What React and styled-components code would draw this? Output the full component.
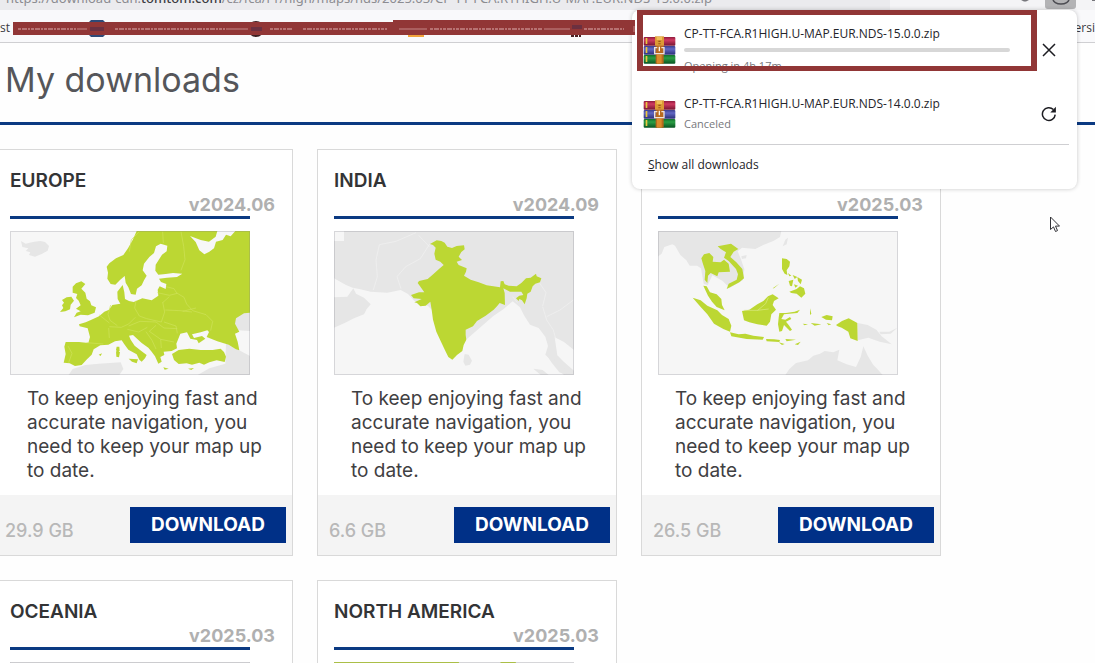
import React from 'react';
import styled, { createGlobalStyle } from 'styled-components';

const GlobalStyle = createGlobalStyle`
    * {
        box-sizing: border-box;
    }
    body {
        margin: 0;
        background: #fefefe;
    }
    h1, h2, p {
        margin: 0;
    }
`;

const Screen = styled.div`
    position: relative;
    height: 100vh;
    overflow: hidden;
    font-family: Inter, "Open Sans", sans-serif;
    color: #333;
`;

const Toolbar = styled.div`
    display: flex;
    align-items: flex-end;
    height: 10px;
    overflow: hidden;
    background: #f4f4f6;
`;

const UrlField = styled.div`
    flex: 1;
    display: flex;
    align-items: flex-end;
    height: 10px;
    padding: 0 0 2px 6px;
    background: #ebebee;
    color: #8c8c91;
    font: 13px/20px "Noto Sans", sans-serif;
    white-space: nowrap;
    b {
        font-weight: 500;
        color: #3c3c42;
    }
`;

const ToolbarButtons = styled.div`
    display: flex;
    justify-content: flex-end;
    width: 205px;
    height: 10px;
`;

const Bookmarks = styled.div`
    position: relative;
    display: flex;
    justify-content: space-between;
    align-items: center;
    height: 33px;
    padding-top: 4px;
    background: #f9f9fb;
    border-bottom: 1px solid #cfcfd2;
    color: #3a3a40;
    font: 12px/16px "Open Sans", sans-serif;
`;

const Strikes = styled.svg`
    position: absolute;
    z-index: 3;
    left: 0;
    top: 8px;
`;

const PageTitle = styled.h1`
    padding: 11px 5px 16px;
    border-bottom: 3px solid #0b3a82;
    color: #55565a;
    font-size: 34px;
    line-height: 52px;
    font-weight: 400;
`;

const Cards = styled.main`
    display: grid;
    grid-template-columns: repeat(auto-fill, 300px);
    gap: 24px;
    margin: 24px 0 0 -7px;
`;

const Card = styled.section`
    border: 1px solid #d9d9d9;
    background: #fff;
`;

const CardHead = styled.div`
    height: 66px;
    padding: 19px 17px 0 16px;
`;

const Region = styled.h2`
    min-height: 24px;
    font-size: 19px;
    line-height: 24px;
    font-weight: 600;
    color: #333436;
`;

const Version = styled.p`
    text-align: right;
    font-size: 18px;
    line-height: 24px;
    font-weight: 700;
    color: #b0b0b0;
`;

const MapBox = styled.div`
    width: 240px;
    margin-left: 16px;
    padding-top: 12px;
    border-top: 3px solid #0b3a82;
    svg {
        display: block;
        width: 240px;
        height: 144px;
    }
`;

const Text = styled.p`
    padding: 12px 12px 12px 33px;
    font-size: 19px;
    line-height: 24px;
    color: #3f4042;
`;

const CardFoot = styled.div`
    display: flex;
    justify-content: space-between;
    align-items: center;
    height: 60px;
    padding: 0 6px 0 11px;
    background: #f4f4f4;
`;

const Size = styled.span`
    padding-top: 12px;
    font-size: 18px;
    line-height: 24px;
    font-weight: 500;
    color: #b8b8b8;
`;

const DownloadButton = styled.button`
    width: 156px;
    height: 36px;
    padding: 0;
    border: 0;
    background: #003087;
    color: #fff;
    font: 700 19px/36px Inter, sans-serif;
`;

const Panel = styled.aside`
    position: absolute;
    z-index: 2;
    top: 10px;
    right: 18px;
    width: 445px;
    height: 179px;
    padding: 14px 8px 0;
    border-radius: 8px;
    background: #fff;
    box-shadow: 0 0 4px rgba(0, 0, 0, 0.22);
    font: 12px/20px "Open Sans", sans-serif;
    color: #24242a;
`;

const DownloadRow = styled.div`
    display: grid;
    grid-template-columns: 33px 1fr 40px;
    column-gap: 8px;
    align-items: center;
    height: ${props => props.$tall ? '70px' : '50px'};
    padding: 0 0 ${props => props.$tall ? '20px' : '10px'} 3px;
`;

const FileInfo = styled.div`
    display: flex;
    flex-direction: column;
    align-items: flex-start;
    progress {
        appearance: none;
        width: 326px;
        height: 4px;
        margin: 4px 0;
        border: 0;
        border-radius: 2px;
        overflow: hidden;
        background: #d7d7d7;
    }
    progress::-webkit-progress-bar {
        background: #d7d7d7;
    }
`;

const Status = styled.span`
    font-size: 11px;
    color: #77777c;
`;

const IconButton = styled.button`
    display: flex;
    justify-content: center;
    width: 40px;
    padding: 0;
    border: 0;
    background: none;
`;

const ShowAll = styled.a`
    display: block;
    padding: 10px 8px;
    border-top: 1px solid #cfcfd2;
    color: inherit;
    text-decoration: none;
`;

const Frame = styled.div`
    position: absolute;
    z-index: 3;
    top: 10px;
    right: 58px;
    width: 400px;
    height: 61px;
    border: solid #913636;
    border-width: 5px 6px;
    pointer-events: none;
`;

const Pointer = styled.svg`
    position: absolute;
    top: 216px;
    right: 35px;
`;

const GREEN = '#bcd733';
const LAND = '#e6e6e6';

function EuropeMap() {
    return (
        <svg viewBox="32 273 720 432" role="img" aria-label="Europe">
            <path fill="#f7f7f7" d="M32 273h720v432H32z" />
            <g fill={LAND}>
                <path d="M65 303l14 8 12-3 14-3 18-2 14 3 12 12-4 14-18 10-20 8-18-5 4-8-14-4 8-8-18-4z" />
                <path d="M208 705l12-18 38-12 40-4 66-4 8 20-12 18z" />
                <path d="M700 540l12-14 26-11 14 4v54l-36-2-12-12zM680 610l34 18 38 20v57H595l35-20 48-14z" />
            </g>
            <g fill={GREEN}>
                <path d="M412 273l-12 27-14 25-14 20-22 10-20 15-8 10 4 18-2 18 10 16 14 2 14-14 14-12 3 20 8 14 8 20 14 2 4-18 14-10 7-15 8-14-12-16 4-20 16-20 14-12 6-20 14-8 20 6-2 17-14 10-10 16-9 14-1 18 9 12 22-2 22-3 28 2-16 10-30 2-24 3 6 10 16 6-2 15-18-8-6 10 2 18-20 14-28-6-26 11-14-3-12-6-2-20-5-22-16 20 1 22 8 14-24 4-10 14-14 6-16 14-26 12-14 6-20 6 2 6 24 6 7 26-5 18-28-3-40 0-4 14 4 22-6 26 18 2 16 8 20-3 16-17 14-14 6-16 20-12 24-2 20-10 20-3 8 12 12 16 25 14 8 16 7 6 10-10 5-10-16-12-20-16-12-18-5-12 12-2 26 24 20 14 10 12 10 14 10 22 10-6-4-14 12-6-2-10 24-2 16-8-2-14 12-30 20-4 10 19 20 4 5 10 20-14-10-8-24 6-6-11 26-6 20-6 5 5-7 15 32 13 34 10 22 14 10 3-5-26-8-24 13-6-13-24 3-16 24-15 22-2V273h-48l-14 16-14-5-10 16-20 5-6 20-14 10-15 8-15-12-11-25-17-18 32 12 25 5 20-15 5-17z" />
                <path d="M518 642l20-12 32-4 34 4 36 0 24-4 10 10 6 14-4 16-24-5-22 6-16 7-14-6-22 6-16-4-24 2-14-12z" />
                <path d="M220 440l10-10 16-6 12 8-12 14 12 12 4 18 10 8 4 12 14 6-4 16-20 8-22-2-20 8 8-14 12-4-14-8 14-10-6-14-8-8 4-12-14-4z" />
                <path d="M188 480l14-8 14-2 8 12-10 12-2 14-14 6-16 2 10-12-4-8 6-8zM352 620l8 0 1 12-6 6-5-8zM350 634l12 2-3 16-8-2zM388 656l28 2-4 12-14-5zM492 682l16 4-12 3zM566 686l18-2-8 6zM298 644l10-4-4 8zM360 460l10 14-8 8z" />
            </g>
            <g fill="none" stroke="#cfe35a" strokeWidth="2">
                <path d="M390 335l6-36 24-24M490 275l2 34M545 275l8 44 4 40-12 32M500 440l24 6 10 16M474 458l36 8 24-6 20 12 8 20 18 20 40 12 20 20-6 28M490 488l20-18M410 482l-4 22 14 24 22 8 44 10 10-30-6-30M498 510l44 2 36 4M334 495l-8 28 6 18 22 16M330 560l36 2 22-10 20-20M300 525l30 24M388 558l34-14 48 2 24 18 40 2M384 568l34 8 26-14M440 575l18 26 12 26M470 556l-20 18 34 24 2 26M484 598l40 8M262 608l50 4M206 618l12 22-10 28M328 564l2 30M494 546l36 12 4 22M590 504l-40 10" />
            </g>
        </svg>
    );
}

function IndiaMap() {
    return (
        <svg viewBox="74 273 720 432" role="img" aria-label="India">
            <path fill={LAND} d="M74 273h720v432H74z" />
            <g fill="#f6f6f6">
                <path d="M74 415l36 20 20 8 20 4 34 8 50 3 40-8 22 12 20 22 40 14 80 80 36 20 80-70 30-20 28-24 22 18 12 24 18 28 26 10 20 26 8 28-8 26 20 20 26 30 10 12H74z" />
                <path d="M736 592l28 14 30 24v62l-30-26-20-20zM74 273h30v30H74z" />
            </g>
            <g fill={LAND}>
                <path d="M74 472l40-2 18-25 8 16 24 12 20 20-12 14-8 16-30 12-28 14-32 14z" />
                <path d="M466 642l12 2 10 18-6 12-14 3-6-12zM672 686l28 4 18 15h-24zM714 648l22 12 18 12 20 20-4 13-20-8-24-30z" />
            </g>
            <g fill="none" stroke="#f1f1f1" strokeWidth="2">
                <path d="M192 450l12-40-4-50 10-46M210 314l50-10 60-26M275 446l-12-36 26-30 44-24 28-44M360 320l-32-34M610 470l14 18M700 500l12 40 20 30 8 30M712 530l40-20 40-30M690 428l20 30-10 40" />
            </g>
            <path fill={GREEN} d="M362 312l20-11 14 2 10 5 8 12 14 4 14-6 22-2 2 12-10 8-8 14 10 10-16 5 6 10 24 10-2 10-6 12 20 12 24 8 24 9 40 6 2-18 8-1 4 10 12 4 24 2 14-10 14-14 14-2 16-12 2 8 14 6-4 12-14 4-8 8-6 16-10 6-2 14-6 18-8-12-8-4-2 6-8-8 10-8 12-2-6-10-34 0-20-10 4 14 1 36-16-6-8 10-10 10-24 18-26 16-12 16-22 10 0 16 2 14-8 16-4 18-16 12-14 14-12-8-10-20-12-26-14-30-10-36-4-30-4-24-14 12-16 2-10-10-8-2 22-10-24-2-8-10 24-8 16 0-14-20-6-8 4-6 26-6 14-12 20-18 14-12-10-10-14-6-4-18 4-18-8-8z" />
        </svg>
    );
}

function AsiaMap() {
    return (
        <svg viewBox="86 154 720 432" role="img" aria-label="South East Asia">
            <path fill="#f6f6f6" d="M86 154h720v432H86z" />
            <g fill={LAND}>
                <path d="M86 154h370l-4 18-20 12-30 12-24 12-40-4-13 11 10 24 10 30-4 32-40 24-22-22-30-16-14 30-12-5-8-46-12-8-22 0-10-16-18-16-16-28-8-4-24 8-8 20-16 12z" />
                <path d="M468 586l12-18 20-18 36-8 16-14 20-6 14-8 26 4 18-8-6 32 28 12 28 8 14-30 8-32 14 30 16 26 12 12 16 18zM685 430l30 6 26 14 16 20 30 24-36-8-34-12-32 8zM750 456l30 0 24-12-20 18-30 2zM460 200l8-20 8-6-4 20zM336 230l16-4-2 10-12 2z" />
            </g>
            <g fill={GREEN}>
                <path d="M265 200l20-4 20-4 22 16-14 8-10 16 18 16 18 20 5 28-14 12-38 20 6-16 24-12 4-16-6-16-22-24-14-10 6-16-16-10zM216 236l8-12 16-4 12 12-2 14 24 2 10-8 14 12 4 24-34 2-4 12-20-10-8 8-2 22-8-10 2-26-8-24z" />
                <path d="M222 318l10 2 10 18 20 6 14 14 2 18 8 16-24-10-14-16-12-18zM190 354l24 8 20 16 30 14 14 14 20 12 8 20-4 18-20-8-28-16-20-28-20-22zM302 458l26 6 20-2 24 6 32 4-4 8-48-2-46-8zM410 478l24 1 18 2-2 6-38-2zM448 488l18 5-8 3zM468 478l32 2-28 5zM496 494l18-8-8 10z" />
                <path d="M338 394l22-4 24-16 18-10 14-14 14-6 18 12-14 8-4 12 10 14-14 14-4 22-10 12-28-4-24-6-16-6z" />
                <path d="M458 236l14 2 10 8-2 14-8 12 2 14-8-4-8-14zM476 280l10 8-6 2zM490 286l14 6-8 6zM478 304l14-4-4 20-6-2zM504 292l14 8-4 14-8-10zM494 314l12 4-8 6zM480 336l22-8 10-8 12 6 4 16-12 12-14-12-16-2zM430 326l20-14-16 14z" />
                <path d="M450 400l20 0 26-4 16-6-8 10-40 4-8 14 12 2 14-8 4 6-16 8 8 10 10 14-6 4-18-18-6 18-8 2-4-22 2-20zM542 386l4 16-4 4zM576 412l16-6 18 4-2 12-18-2zM520 432l16 2-10 3zM544 430l32 4-20 4zM592 430l14 4-8 3zM620 436l18-12 20-8 26 14 1 54-22-8-6-20-20-12-12-4z" />
            </g>
            <path fill="none" stroke="#dbea86" strokeWidth="2" d="M345 392l40 0 24-20 8-18M384 392l34-4" />
        </svg>
    );
}

function OceaniaMap() {
    return (
        <svg viewBox="0 0 240 144" role="img" aria-label="Oceania">
            <path fill="#f6f6f6" d="M0 0h240v144H0z" />
            <path fill="none" stroke="#dcdcdc" d="M0 0h240v144H0z" />
        </svg>
    );
}

function NorthAmericaMap() {
    return (
        <svg viewBox="0 0 240 144" role="img" aria-label="North America">
            <path fill="#f6f6f6" d="M0 0h240v144H0z" />
            <path fill={GREEN} d="M0 0h125l-10 60-60 50L0 30zM166 0h16l-4 12z" />
        </svg>
    );
}

const MapFrame = styled.div`
    position: relative;
    &::after {
        content: "";
        position: absolute;
        inset: 0;
        border: 1px solid rgba(120, 120, 130, 0.25);
    }
`;

function ArchiveIcon() {
    return (
        <svg width="33" height="28" viewBox="0 0 99 84">
            <defs>
                <linearGradient id="red" x1="0" y1="0" x2="0" y2="1">
                    <stop offset="0" stopColor="#8f1a3c" />
                    <stop offset=".35" stopColor="#cf3a61" />
                    <stop offset="1" stopColor="#771633" />
                </linearGradient>
                <linearGradient id="blue" x1="0" y1="0" x2="0" y2="1">
                    <stop offset="0" stopColor="#3b3f8f" />
                    <stop offset=".35" stopColor="#6268c4" />
                    <stop offset="1" stopColor="#2b2f78" />
                </linearGradient>
                <linearGradient id="green" x1="0" y1="0" x2="0" y2="1">
                    <stop offset="0" stopColor="#12702c" />
                    <stop offset=".35" stopColor="#2b9e44" />
                    <stop offset="1" stopColor="#0a5422" />
                </linearGradient>
            </defs>
            <rect x="2" y="3" width="95" height="26" rx="3" fill="url(#red)" />
            <rect x="2" y="30" width="95" height="26" rx="3" fill="url(#blue)" />
            <rect x="2" y="57" width="95" height="26" rx="3" fill="url(#green)" />
            <path fill="#e9c63f" d="M8 6h5v18H8zM8 33h5v18H8zM8 60h5v18H8z" />
            <path fill="#b8691d" d="M38 28h24v55H38z" />
            <path fill="#d98a2b" d="M42 56h14v27H42z" />
            <path fill="#dc9a35" d="M36 1h27v28H36z" />
            <path fill="#f0bf58" d="M41 3h16v9H41z" />
            <path fill="#9a5418" d="M46 14h7v4h-7zM46 22h7v3h-7z" />
            <path fill="none" stroke="#efe3dc" strokeWidth="4" d="M43 35H35v18h28V35h-8" />
            <path fill="#f7f3ec" d="M47 32h4v14h-4z" />
        </svg>
    );
}

function DownloadsPanel() {
    return (
        <Panel>
            <DownloadRow $tall>
                <ArchiveIcon />
                <FileInfo>
                    <span>CP-TT-FCA.R1HIGH.U-MAP.EUR.NDS-15.0.0.zip</span>
                    <progress value="0" max="100" aria-label="Download progress" />
                    <Status>Opening in 4h 17m</Status>
                </FileInfo>
                <IconButton aria-label="Cancel">
                    <svg width="14" height="14" viewBox="0 0 14 14" stroke="#1d1d22" strokeWidth="1.5">
                        <path d="M1 1l12 12M13 1L1 13" />
                    </svg>
                </IconButton>
            </DownloadRow>
            <DownloadRow>
                <ArchiveIcon />
                <FileInfo>
                    <span>CP-TT-FCA.R1HIGH.U-MAP.EUR.NDS-14.0.0.zip</span>
                    <Status>Canceled</Status>
                </FileInfo>
                <IconButton aria-label="Retry">
                    <svg width="16" height="16" viewBox="0 0 16 16" fill="none" stroke="#1d1d22" strokeWidth="1.5">
                        <path d="M14.2 8.6A6.4 6.4 0 1 1 12.4 3.6" />
                        <path fill="#1d1d22" stroke="none" d="M14.9 .8v5.6H9.3z" />
                    </svg>
                </IconButton>
            </DownloadRow>
            <ShowAll href="#downloads"><u>S</u>how all downloads</ShowAll>
        </Panel>
    );
}

const regions = [
    { id: 'eu', name: 'EUROPE', version: 'v2024.06', size: '29.9 GB', Map: EuropeMap },
    { id: 'in', name: 'INDIA', version: 'v2024.09', size: '6.6 GB', Map: IndiaMap },
    { id: 'sea', name: '', version: 'v2025.03', size: '26.5 GB', Map: AsiaMap },
    { id: 'oce', name: 'OCEANIA', version: 'v2025.03', size: '', Map: OceaniaMap },
    { id: 'na', name: 'NORTH AMERICA', version: 'v2025.03', size: '', Map: NorthAmericaMap },
];

function RegionCard({ name, version, size, Map }) {
    return (
        <Card>
            <CardHead>
                <Region>{name}</Region>
                <Version>{version}</Version>
            </CardHead>
            <MapBox>
                <MapFrame><Map /></MapFrame>
            </MapBox>
            {size && (
                <>
                    <Text>To keep enjoying fast and accurate navigation, you need to keep your map up to date.</Text>
                    <CardFoot>
                        <Size>{size}</Size>
                        <DownloadButton>DOWNLOAD</DownloadButton>
                    </CardFoot>
                </>
            )}
        </Card>
    );
}

function App() {
    return (
        <Screen>
            <GlobalStyle />
            <Toolbar>
                <UrlField>
                    <span>https://download-cdn.<b>tomtom.com</b>/cz/fca/r1/high/maps/nds/2025.03/CP-TT-FCA.R1HIGH.U-MAP.EUR.NDS-15.0.0.zip</span>
                </UrlField>
                <ToolbarButtons>
                    <svg width="75" height="10" viewBox="0 0 75 10">
                        <path fill="#b3b3b5" d="M25 0h31v6a3 3 0 0 1-3 3H28a3 3 0 0 1-3-3z" />
                        <path fill="none" stroke="#4c4c52" strokeWidth="1.5" d="M33 -1a8 5 0 0 0 16 0" />
                        <path fill="#77777c" d="M1 0h8l-3 1.500H4zM72 0h3v1h-3z" />
                    </svg>
                </ToolbarButtons>
            </Toolbar>
            <Bookmarks>
                <span>st -</span>
                <span>ersi</span>
                <Strikes width="640" height="22" viewBox="0 18 640 22">
                    <path fill="#2e4a78" d="M89 22l2-2h12l2 2v13l-2 2H91l-2-2z" />
                    <circle cx="256" cy="29" r="8" fill="#3c2023" />
                    <path fill="#f2a33a" d="M408 30h16v7h-16z" />
                    <path fill="#4c2326" d="M571 34h3v3h-3zM575 34h3v3h-3zM579 34h2v3h-2z" />
                    <path fill="#913636" d="M13 22h382v13H13zM393 20h242v15H393z" />
                    <path fill="#6b3040" d="M90 27h14v4H90zM251 27h11v4h-11zM572 25h10v4h-10z" />
                    <path stroke="#c48787" strokeWidth="1.5" strokeDasharray="3 1 5 1 2 1" d="M18 29h58M115 29h110M270 29h22M303 29h84M430 29h112M584 29h40" />
                    <path stroke="#c48787" d="M77 29h10M226 29h22M399 29h28M544 29h26M634 26v6" />
                </Strikes>
            </Bookmarks>
            <PageTitle>My downloads</PageTitle>
            <Cards>
                {regions.map(region => <RegionCard key={region.id} {...region} />)}
            </Cards>
            <DownloadsPanel />
            <Frame />
            <Pointer width="10" height="17" viewBox="0 0 10 17">
                <path fill="#fff" stroke="#333338" d="M.5 1v12.500l3-2.600 2 4.600 2-.9-2-4.500h4z" />
            </Pointer>
        </Screen>
    );
}

export default App;
